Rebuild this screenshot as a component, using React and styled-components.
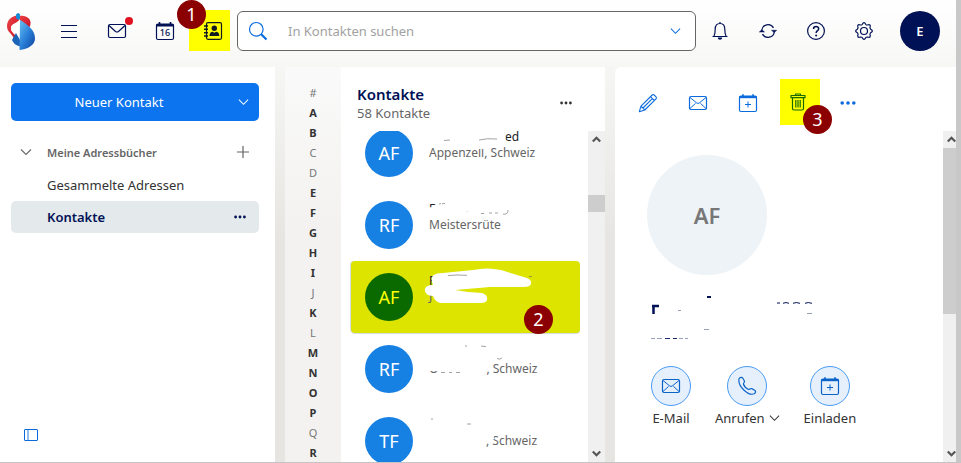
import React, { Component } from 'react';
import styled, { createGlobalStyle, css } from 'styled-components';

const GlobalStyle = createGlobalStyle`
  * {
    box-sizing: border-box;
  }
  body {
    margin: 0;
    font-family: 'Noto Sans', 'Open Sans', sans-serif;
    font-size: 13px;
    color: #333;
  }
  button, input {
    font: inherit;
    color: inherit;
  }
  button {
    border: 0;
    padding: 0;
    background: none;
    cursor: pointer;
  }
`

const Page = styled.div`
  height: 100vh;
  display: flex;
  flex-direction: column;
  overflow: hidden;
  background: linear-gradient(to bottom, #fff 0, #f6f6f5 67px, #e6e5e1 240px);
  border-right: 5px solid #c8c8c8;
  border-bottom: 1px solid #c4c4c4;
`

const Header = styled.header`
  height: 67px;
  flex: none;
  display: flex;
  align-items: flex-start;
  padding: 11px 16px 0 0;
  background: linear-gradient(to bottom, #fff, #f7f7f6);
`

const Logo = styled.a`
  width: 45px;
  height: 40px;
  padding-left: 7px;
  display: flex;
  align-items: center;
`

const HeaderButton = styled.button`
  position: relative;
  width: 48px;
  height: 40px;
  display: flex;
  align-items: center;
  justify-content: center;
  color: #001155;
`

const ActiveTab = styled.div`
  position: relative;
  width: 48px;
  margin-top: -1px;
  display: flex;

  button {
    width: 41px;
    height: 41px;
    padding-left: 7px;
    background: #ff0;
    color: #111a22;
  }
`

const Unread = styled.span`
  position: absolute;
  top: 6px;
  right: 8px;
  width: 8px;
  height: 8px;
  border-radius: 50%;
  background: #e01020;
`

const Step = styled.span`
  position: absolute;
  z-index: 2;
  width: 29px;
  height: 29px;
  border-radius: 50%;
  background: #8b0000;
  color: #fff;
  font-size: 18px;
  line-height: 28px;
  text-align: center;
  ${({ $place }) => $place === 'tab' && css`top: -10px; left: -12px;`}
  ${({ $place }) => $place === 'row' && css`right: 27px; bottom: -1px;`}
  ${({ $place }) => $place === 'tool' && css`left: 30px; top: 26px;`}
`

const Search = styled.form`
  flex: 1;
  height: 40px;
  display: flex;
  align-items: center;
  border: 1px solid #666;
  border-radius: 6px;
  background: #fff;
  color: #0b6bdc;

  > button {
    width: 40px;
    height: 38px;
    display: flex;
    align-items: center;
    justify-content: center;
  }
  input {
    flex: 1;
    min-width: 0;
    border: 0;
    outline: 0;
    padding: 3px 10px;
    background: none;
    color: #333;
  }
  input::placeholder {
    color: #a2a2a2;
    opacity: 1;
  }
`

const Account = styled.button`
  width: 40px;
  height: 40px;
  margin-left: 12px;
  border-radius: 50%;
  background: #001155;
  color: #fff;
  font-weight: 600;
`

const Columns = styled.div`
  flex: 1;
  min-height: 0;
  display: grid;
  grid-template-columns: 275px 320px 1fr;
  gap: 10px;
`

const Sidebar = styled.nav`
  display: flex;
  flex-direction: column;
  padding: 16px 16px 19px 11px;
  background: #fff;
`

const NewContact = styled.div`
  display: flex;
  height: 38px;
  border-radius: 5px;
  background: #0b74ee;
  color: #fff;

  button:first-child {
    flex: 1;
  }
  button:last-child {
    width: 32px;
    display: flex;
    align-items: center;
    justify-content: center;
  }
`

const GroupHead = styled.div`
  display: flex;
  align-items: center;
  height: 32px;
  margin-top: 15px;
  margin-bottom: 1px;
  padding-left: 8px;
  color: #666;

  button {
    display: flex;
    align-items: center;
  }
  button:first-child {
    flex: 1;
    gap: 14px;
    font-size: 11px;
    font-weight: 600;
  }
  button:last-child {
    width: 32px;
    height: 32px;
    justify-content: center;
  }
`

const Folder = styled.div`
  display: flex;
  align-items: center;
  height: 32px;
  padding-left: 36px;
  border-radius: 5px;
  background: ${({ $active }) => ($active ? '#e4e9ec' : 'none')};

  a {
    flex: 1;
    text-decoration: none;
    color: ${({ $active }) => ($active ? '#001155' : '#333')};
    font-weight: ${({ $active }) => ($active ? 600 : 400)};
  }
  button {
    width: 38px;
    height: 32px;
    display: flex;
    align-items: center;
    justify-content: center;
    color: #001155;
  }
`

const PanelToggle = styled.button`
  margin: auto 0 0 13px;
  width: 16px;
  height: 16px;
  color: #0b6bdc;

  svg {
    display: block;
  }
`

const ListPanel = styled.section`
  display: flex;
  min-height: 0;
`

const Alphabet = styled.div`
  width: 56px;
  flex: none;
  display: flex;
  flex-direction: column;
  align-items: center;
  overflow: hidden;
  padding-top: 16px;
  background: linear-gradient(to bottom, #fafafa, #f3f2f0 160px);
`

const Letter = styled.a`
  flex: none;
  height: 20px;
  line-height: 20px;
  font-size: 11px;
  text-decoration: none;
  font-weight: ${({ $filled }) => ($filled ? 700 : 400)};
  color: ${({ $filled }) => ($filled ? '#333' : '#777')};
`

const ListBody = styled.div`
  flex: 1;
  min-width: 0;
  display: flex;
  flex-direction: column;
  background: #fff;
`

const ListHead = styled.div`
  flex: none;
  height: 64px;
  display: flex;
  align-items: center;
  justify-content: space-between;
  padding: 8px 24px 0 16px;

  h2 {
    margin: 0;
    font-size: 15px;
    font-weight: 600;
    line-height: 20px;
    color: #001155;
  }
  p {
    margin: 0;
    line-height: 18px;
    color: #666;
  }
  button {
    width: 30px;
    height: 30px;
    display: flex;
    align-items: center;
    justify-content: center;
  }
`

const Scroller = styled.div`
  flex: 1;
  min-height: 0;
  display: flex;
  overflow: hidden;
`

const Bar = styled.div`
  flex: none;
  width: ${({ $narrow }) => ($narrow ? 13 : 17)}px;
  display: flex;
  flex-direction: column;
  align-items: ${({ $narrow }) => ($narrow ? 'flex-start' : 'center')};
  overflow: hidden;
  background: #f0f0f0;
  color: #555;

  svg {
    flex: none;
  }
`

const Track = styled.div`
  flex: 1;
  align-self: stretch;
  padding-top: ${({ $start }) => $start};
`

const Thumb = styled.div`
  height: ${({ $size }) => $size};
  background: #cdcdcd;
`

const Contacts = styled.ul`
  flex: 1;
  min-width: 0;
  list-style: none;
  margin: -14px 8px 0 10px;
  padding: 0;
`

const Contact = styled.li`
  position: relative;
  height: 72px;
  display: flex;
  align-items: center;
  gap: 16px;
  padding-left: 14px;
  border-radius: 4px;
  background: ${({ $selected }) => ($selected ? '#dce400' : 'none')};
  box-shadow: ${({ $selected }) => ($selected ? '-1px 0 0 #d5dde3, 0 1px 0 #d5dde3' : 'none')};
`

const Initials = styled.span`
  flex: none;
  width: 48px;
  height: 48px;
  border-radius: 50%;
  font-size: 18px;
  line-height: 49px;
  text-align: center;
  background: ${({ $selected }) => ($selected ? '#0a6a00' : '#1781e3')};
  color: ${({ $selected }) => ($selected ? '#ff0' : '#fff')};
`

const Details = styled.div`
  align-self: flex-start;
  padding-top: 13px;
  font-size: 12px;
  color: #666;

  strong {
    display: flex;
    height: 14px;
    font-size: 12px;
    line-height: 14px;
    font-weight: 400;
    color: #222;
  }
  div {
    display: flex;
    line-height: 18px;
  }
`

const Hidden = styled.span`
  width: ${({ $width }) => $width}px;
`

const Smudge = styled.svg`
  position: absolute;
  left: 0;
  top: 0;
`

const DetailPanel = styled.main`
  min-width: 0;
  display: flex;
  flex-direction: column;
  border-top-left-radius: 6px;
  background: #fff;
`

const Toolbar = styled.div`
  flex: none;
  height: 64px;
  display: flex;
  padding: 12px 0 0 8px;
  color: #0b6bdc;
`

const Tool = styled.div`
  position: relative;
  width: 50px;
  padding: 0 6px;
  z-index: 1;

  button {
    width: 38px;
    height: 48px;
    display: flex;
    align-items: center;
    justify-content: center;
  }
  &.marked {
    padding: 0 3px 0 7px;
  }
  &.marked button {
    width: 40px;
    height: 46px;
    padding-right: 4px;
    background: #ff0;
    color: #176b00;
  }
`

const Card = styled.div`
  flex: 1;
  min-width: 0;
  padding: 24px 0 0 32px;
`

const Portrait = styled.div`
  width: 120px;
  height: 120px;
  border-radius: 50%;
  background: #edf3f6;
  color: #777;
  font-size: 22px;
  font-weight: 600;
  line-height: 120px;
  text-align: center;
`

const NameBlock = styled.div`
  height: 91px;
  padding-top: 16px;
`

const Actions = styled.div`
  display: flex;
  gap: 24px;
  padding-left: 4px;
`

const Action = styled.button`
  display: flex;
  flex-direction: column;
  align-items: center;

  .circle {
    width: 40px;
    height: 40px;
    border-radius: 50%;
    border: 1px solid #4a9bf5;
    background: #e5f0fc;
    color: #0b63c8;
    display: flex;
    align-items: center;
    justify-content: center;
  }
  .label {
    display: flex;
    align-items: center;
    gap: 4px;
    line-height: 24px;
  }
`

const Svg = ({ size = 20, children, ...rest }) => (
  <svg
    width={size}
    height={size}
    viewBox="0 0 20 20"
    fill="none"
    stroke="currentColor"
    strokeWidth="1.2"
    strokeLinejoin="round"
    aria-hidden="true"
    {...rest}
  >
    {children}
  </svg>
)

const Chevron = ({ width = 12 }) => (
  <svg width={width} height="8" viewBox="0 0 12 8" fill="none" stroke="currentColor" aria-hidden="true">
    <path d="M1 1.5l5 5 5-5" strokeWidth="1.1" />
  </svg>
)

const Dots = ({ wide }) => (
  <svg width={wide ? 16 : 12} height="4" viewBox={wide ? '0 0 16 4' : '0 0 12 4'} fill="currentColor" aria-hidden="true">
    <circle cx={wide ? 2.2 : 1.6} cy="2" r={wide ? 1.8 : 1.4} />
    <circle cx={wide ? 8 : 6} cy="2" r={wide ? 1.8 : 1.4} />
    <circle cx={wide ? 13.8 : 10.4} cy="2" r={wide ? 1.8 : 1.4} />
  </svg>
)

const MailIcon = () => (
  <Svg>
    <rect x="1.5" y="3.5" width="17" height="13" rx="1.5" />
    <path d="M2 4.500l6.800 5.500q1.200.8 2.400 0l6.800-5.500M2 15.500l5.600-5.200M18 15.500l-5.600-5.200" strokeWidth="1" />
  </Svg>
)

const CalendarPlusIcon = () => (
  <Svg>
    <rect x="1.5" y="3" width="17" height="15.5" rx="1.5" />
    <path d="M1.5 3h17v2.2h-17z" fill="currentColor" stroke="none" />
    <path d="M5 1.300v3M15 1.300v3" strokeWidth="1.6" />
    <path d="M10 8.500v6M7 11.500h6" strokeWidth="1" />
  </Svg>
)

const ScrollArrow = ({ down }) => (
  <svg width="17" height="17" viewBox="0 0 17 17" fill="none" stroke="currentColor" strokeWidth="2.2" aria-hidden="true">
    <path d={down ? 'M4.8 6.5l3.7 3.7 3.7-3.7' : 'M4.8 10.5l3.7-3.7 3.7 3.7'} />
  </svg>
)

const Scrollbar = ({ start, size, narrow }) => (
  <Bar $narrow={narrow}>
    <ScrollArrow />
    <Track $start={start}>
      <Thumb $size={size} />
    </Track>
    <ScrollArrow down />
  </Bar>
)

const letters = '#ABCDEFGHIJKLMNOPQR'.split('')
const emptyLetters = '#CDJLQ'

const contacts = [
  {
    initials: 'AF',
    name: <>I<Hidden $width={72} />ed</>,
    place: 'Appenzell, Schweiz',
    smudge: 'M76 10h20l54 5 5 6-5 2-74 2z M124 26l12 3 4 3h-14z',
    marks: 'M93 23.500l6-.5M128 23q8-2 18-1',
  },
  {
    initials: 'RF',
    name: <>F<Hidden $width={30} />,</>,
    place: 'Meistersrüte',
    smudge: 'M76 19L90 16L102 17L124 26L124 29L76 29z M76 5h40v10h-40z',
    marks: 'M88 15l2-.4M91 14.600h3M130 24.500h3M138 24h3M144 24h3M152 25q5 1 5-4',
  },
  {
    initials: 'AF',
    name: 'F',
    place: 'J',
    selected: true,
    smudge:
      'M81 16Q83 12 92 12L122 9Q136 6 150 9L176 17Q181 19 180 23Q179 26 173 26L139 26L104 29L117 31L131 32Q137 34 136 39Q135 42 130 42L90 42Q84 41 82 35Q73 34 74 28Q75 24 82 24Q80 20 81 16z',
    marks: 'M97 14.500l10-.5 9 .4M178 15.500h3',
  },
  {
    initials: 'RF',
    name: '',
    place: <>O<Hidden $width={48} />, Schweiz</>,
    smudge: 'M76 22h51v16h-51z',
    marks: 'M114 13h2M130 13l5 .6M146 25.500q3 1.500 5-.5M90 39.500h4M98 39.500h3M105 39.500h4',
  },
  {
    initials: 'TF',
    name: '',
    place: <><Hidden $width={57} />, Schweiz</>,
    smudge: 'M127 24h15l1 10-5 3-2-1z',
    marks: 'M80 14h2M116 19h4',
  },
]

class App extends Component {
  renderHeader() {
    return (
      <Header>
        <Logo href="#" aria-label="Startseite">
          <svg width="29" height="38" viewBox="0 0 29 38" aria-hidden="true">
            <defs>
              <linearGradient id="sail" x1="0" y1="0" x2="1" y2="1">
                <stop offset="0" stopColor="#6cc0f0" />
                <stop offset=".5" stopColor="#2a80d8" />
                <stop offset="1" stopColor="#0d3f9c" />
              </linearGradient>
              <linearGradient id="band" x1="0" y1="0" x2="1" y2="1">
                <stop offset="0" stopColor="#ee4348" />
                <stop offset="1" stopColor="#c40d22" />
              </linearGradient>
            </defs>
            <path d="M13 3.500C5 2.500 0 8 0 14c0 7 5 6 8 15l4 2V27C9 22 4 21 4 16c0-5 8-3 9-8z" fill="url(#band)" />
            <path d="M12 4c7-1.500 12 2.500 11.500 8-.2 2-1.500 4-3 5.500L12 9z" fill="url(#band)" />
            <path d="M9 2.500Q11.500-.5 13 2.500V7q-2 2-4-1z" fill="#168bd8" />
            <path d="M13 7v22C9 22 4 21 4 16c0-5 6-4 9-9z" fill="#fff" />
            <path d="M9 21L5 28q2 5 8 6.500V28z" fill="#1b64b8" />
            <path d="M13 8c8 4.500 15 10.500 15 18.500C28 33 21 37 12.500 38z" fill="url(#sail)" />
          </svg>
        </Logo>
        <HeaderButton aria-label="Menü">
          <Svg>
            <path d="M2 4.500h16M2 10.500h16M2 16.500h16" />
          </Svg>
        </HeaderButton>
        <HeaderButton aria-label="E-Mail">
          <Svg>
            <rect x="1.5" y="3.5" width="17" height="13" rx="1.5" />
            <path d="M2 4.5l6.5 6q1.5 1 3 0l6.5-6" />
          </Svg>
          <Unread />
        </HeaderButton>
        <HeaderButton aria-label="Kalender">
          <Svg>
            <rect x="1.5" y="3" width="17" height="15.5" rx="1.5" />
            <path d="M1.5 3h17v2.5h-17z" fill="currentColor" stroke="none" />
            <path d="M4.5 1v3M15.5 1v3" strokeWidth="1.6" />
            <text x="10" y="15" fontSize="9" fontWeight="500" textAnchor="middle" fill="currentColor" stroke="none">
              16
            </text>
          </Svg>
        </HeaderButton>
        <ActiveTab>
          <HeaderButton aria-label="Kontakte">
            <Svg>
              <rect x="3.5" y="1.7" width="15" height="16.6" rx="1.5" />
              <path d="M1 5h4M1 8.3h4M1 11.7h4M1 15h4" strokeWidth="1.5" />
              <circle cx="11.3" cy="7.3" r="2.7" fill="currentColor" stroke="none" />
              <path d="M6.500 15c0-3 1.500-4 3-4.200l1.800 1 1.800-1c1.800.2 3.200 1.300 3.200 4.200z" fill="currentColor" stroke="none" />
            </Svg>
          </HeaderButton>
          <Step $place="tab">1</Step>
        </ActiveTab>
        <Search role="search">
          <button type="button" aria-label="Suchen">
            <Svg>
              <circle cx="8.300" cy="8.300" r="6.800" />
              <path d="M13 13l5.500 5.500" strokeWidth="2.200" />
            </Svg>
          </button>
          <input type="text" aria-label="In Kontakten suchen" placeholder="In Kontakten suchen" />
          <button type="button" aria-label="Suchoptionen">
            <Chevron width={11} />
          </button>
        </Search>
        <HeaderButton aria-label="Benachrichtigungen">
          <Svg>
            <path d="M2.500 15.500h15M4 15.300c1-2 1.200-4 1.200-7C5.200 4.500 7 2.500 10 2.500s4.800 2 4.800 5.800c0 3 .2 5 1.200 7M10 1v1.500" />
            <path d="M7.800 16.500h4.400c0 3-4.400 3-4.400 0z" fill="currentColor" stroke="none" />
          </Svg>
        </HeaderButton>
        <HeaderButton aria-label="Aktualisieren">
          <Svg>
            <path d="M3.700 9.500a6.300 6.300 0 0 1 11.800-2.600M16.300 10.500a6.300 6.300 0 0 1-11.800 2.600" />
            <path d="M1.300 11L3.800 8.700 6.500 11zM13.500 9.300h5.200L16.200 11.600z" fill="currentColor" strokeWidth=".5" />
          </Svg>
        </HeaderButton>
        <HeaderButton aria-label="Hilfe">
          <Svg>
            <circle cx="10" cy="10" r="8.400" />
            <path d="M7.500 8c0-3.400 5.200-3.200 5.200-.3 0 2-2.600 2-2.600 4.300" strokeWidth="1.500" />
            <circle cx="10.100" cy="14.400" r="1" fill="currentColor" stroke="none" />
          </Svg>
        </HeaderButton>
        <HeaderButton aria-label="Einstellungen">
          <Svg>
            <circle cx="10" cy="10" r="3.500" />
            <path d="M8.300 3.300Q10 0 11.700 3.300Q12.400 4 13.500 4Q17.200 2.800 16 6.500Q16 7.600 16.700 8.300Q20 10 16.700 11.700Q16 12.400 16 13.500Q17.200 17.200 13.500 16Q12.400 16 11.700 16.700Q10 20 8.300 16.700Q7.600 16 6.500 16Q2.800 17.200 4 13.500Q4 12.400 3.300 11.700Q0 10 3.300 8.300Q4 7.600 4 6.500Q2.800 2.800 6.500 4Q7.600 4 8.300 3.300z" />
          </Svg>
        </HeaderButton>
        <Account aria-label="Konto E">E</Account>
      </Header>
    );
  }

  renderSidebar() {
    return (
      <Sidebar>
        <NewContact>
          <button>Neuer Kontakt</button>
          <button aria-label="Weitere Aktionen">
            <Chevron width={11} />
          </button>
        </NewContact>
        <GroupHead>
          <button>
            <Chevron width={14} />
            Meine Adressbücher
          </button>
          <button aria-label="Adressbuch hinzufügen">
            <svg width="12" height="12" viewBox="0 0 12 12" stroke="currentColor" strokeWidth="1.2" aria-hidden="true">
              <path d="M6 0v12M0 6h12" />
            </svg>
          </button>
        </GroupHead>
        <Folder>
          <a href="#gesammelt">Gesammelte Adressen</a>
        </Folder>
        <Folder $active>
          <a href="#kontakte">Kontakte</a>
          <button aria-label="Ordneraktionen">
            <Dots />
          </button>
        </Folder>
        <PanelToggle aria-label="Ordneransicht schliessen">
          <svg width="15" height="16" viewBox="0 0 15 16" fill="none" stroke="currentColor" aria-hidden="true">
            <rect x=".5" y="2.5" width="13" height="11" rx=".5" />
            <path d="M4 3v10" strokeWidth="1.5" opacity=".6" />
          </svg>
        </PanelToggle>
      </Sidebar>
    );
  }

  renderList() {
    return (
      <ListPanel>
        <Alphabet>
          {letters.map(l => (
            <Letter key={l} href={`#${l}`} $filled={!emptyLetters.includes(l)}>{l}</Letter>
          ))}
        </Alphabet>
        <ListBody>
          <ListHead>
            <div>
              <h2>Kontakte</h2>
              <p>58 Kontakte</p>
            </div>
            <button aria-label="Listenoptionen">
              <Dots />
            </button>
          </ListHead>
          <Scroller>
            <Contacts>
              {contacts.map((c, i) => (
                <Contact key={i} $selected={c.selected}>
                  <Initials $selected={c.selected}>{c.initials}</Initials>
                  <Details>
                    <strong>{c.name}</strong>
                    <div>{c.place}</div>
                  </Details>
                  <Smudge width="200" height="72" viewBox="0 0 200 72" aria-hidden="true">
                    <path d={c.smudge} fill="#fff" />
                    <path d={c.marks} fill="none" stroke="#666" opacity=".6" />
                  </Smudge>
                  {c.selected && <Step $place="row">2</Step>}
                </Contact>
              ))}
            </Contacts>
            <Scrollbar start="47px" size="17px" />
          </Scroller>
        </ListBody>
      </ListPanel>
    );
  }

  renderDetail() {
    return (
      <DetailPanel>
        <Toolbar>
          <Tool>
            <button aria-label="Bearbeiten">
              <Svg>
                <path d="M1.300 18.700l1.700-5.500L14.200 2q1-1 2 0L18 3.800q1 1 0 2L6.800 17zM3 13.200L6.800 17M12.500 3.700l3.800 3.800M5 15L14.300 5.700" strokeWidth="1.100" />
              </Svg>
            </button>
          </Tool>
          <Tool>
            <button aria-label="E-Mail senden"><MailIcon /></button>
          </Tool>
          <Tool>
            <button aria-label="Einladen"><CalendarPlusIcon /></button>
          </Tool>
          <Tool className="marked">
            <button aria-label="Löschen">
              <Svg>
                <path d="M3 3.500h14v2.200H3zM7.500 3.500V2h5v1.500M4.500 6v10.500q0 1.500 1.500 1.500h8q1.500 0 1.500-1.500V6M7.800 8v7.500M10 8v7.500M12.200 8v7.500" />
              </Svg>
            </button>
            <Step $place="tool">3</Step>
          </Tool>
          <Tool>
            <button aria-label="Weitere Aktionen"><Dots wide /></button>
          </Tool>
        </Toolbar>
        <Scroller>
          <Card>
            <Portrait>AF</Portrait>
            <NameBlock>
              <svg width="180" height="60" viewBox="0 0 180 60" fill="none" stroke="#001155" aria-hidden="true">
                <path d="M5 15h7M6.500 14v9" strokeWidth="2.500" />
                <path d="M60 6h4" strokeWidth="2" />
                <path d="M130 12h3M136 12.300q3-1.500 6 0M146 12.300q3-1.500 7 0M158 12.300q3-1.500 7 0" />
                <path d="M160 22.500h5M31 19.500h3M57 38.500h5" opacity=".4" />
                <path d="M4 47.500h4M10 47.500h5" opacity=".4" />
                <path d="M18 47.500h5M26 47.500h4" opacity=".9" />
                <path d="M32 47.500h4M38 47.500h3" opacity=".4" />
              </svg>
            </NameBlock>
            <Actions>
              <Action>
                <span className="circle"><MailIcon /></span>
                <span className="label">E-Mail</span>
              </Action>
              <Action>
                <span className="circle">
                  <Svg>
                    <path d="M2 2.800C3 1.200 4.800.8 5.800 2.200l1.500 2.600c.7 1.300-.8 2-.9 3.200.7 2.200 2.800 4.500 5.200 5.500 1.200 0 1.800-1.500 3.100-.9l3 1.600c1.400 1 .9 2.700-.6 3.600C12 20 .5 11 2 2.800z" />
                  </Svg>
                </span>
                <span className="label">Anrufen <Chevron width={11} /></span>
              </Action>
              <Action>
                <span className="circle"><CalendarPlusIcon /></span>
                <span className="label">Einladen</span>
              </Action>
            </Actions>
          </Card>
          <Scrollbar start="0" size="56%" narrow />
        </Scroller>
      </DetailPanel>
    );
  }

  render() {
    return (
      <>
        <GlobalStyle />
        <Page>
          {this.renderHeader()}
          <Columns>
            {this.renderSidebar()}
            {this.renderList()}
            {this.renderDetail()}
          </Columns>
        </Page>
      </>
    );
  }
}

export default App;
